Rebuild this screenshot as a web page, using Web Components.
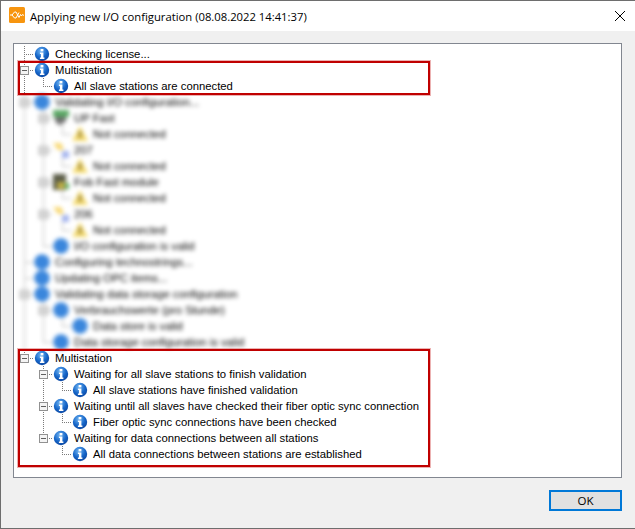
<!DOCTYPE html>
<html>
<head>
<meta charset="utf-8">
<title>Applying new I/O configuration</title>
<style>
  html, body { margin: 0; height: 100%; background: #f0f0f0; }
</style>
</head>
<body>

<config-dialog caption="Applying new I/O configuration (08.08.2022 14:41:37)">
  <tree-view>
    <tree-row depth="0" link="tee" text="Checking license..."></tree-row>
    <tree-row depth="0" link="tee" toggle text="Multistation"></tree-row>
    <tree-row depth="1" guides="0" link="end" text="All slave stations are connected"></tree-row>

    <blur-group>
      <tree-row depth="0" guides="" link="tee" toggle flat text="Validating I/O configuration..."></tree-row>
      <tree-row depth="1" guides="0" link="tee" toggle icon="module" text="UP Fast"></tree-row>
      <tree-row depth="2" guides="0,1" link="end" icon="warn" text="Not connected"></tree-row>
      <tree-row depth="1" guides="0" link="tee" toggle icon="key" text="207"></tree-row>
      <tree-row depth="2" guides="0,1" link="end" icon="warn" text="Not connected"></tree-row>
      <tree-row depth="1" guides="0" link="tee" toggle icon="box" text="Fob Fast module"></tree-row>
      <tree-row depth="2" guides="0,1" link="end" icon="warn" text="Not connected"></tree-row>
      <tree-row depth="1" guides="0" link="tee" toggle icon="key" text="206"></tree-row>
      <tree-row depth="2" guides="0,1" link="end" icon="warn" text="Not connected"></tree-row>
      <tree-row depth="1" guides="0" link="end" flat text="I/O configuration is valid"></tree-row>
      <tree-row depth="0" link="tee" flat text="Configuring technostrings..."></tree-row>
      <tree-row depth="0" link="tee" flat text="Updating OPC items..."></tree-row>
      <tree-row depth="0" link="tee" toggle flat text="Validating data storage configuration"></tree-row>
      <tree-row depth="1" guides="0" link="tee" toggle flat text="Verbrauchswerte (pro Stunde)"></tree-row>
      <tree-row depth="2" guides="0,1" link="end" flat text="Data store is valid"></tree-row>
      <tree-row depth="1" guides="0" link="end" flat text="Data storage configuration is valid"></tree-row>
    </blur-group>

    <tree-row depth="0" link="end" toggle text="Multistation"></tree-row>
    <tree-row depth="1" link="tee" toggle text="Waiting for all slave stations to finish validation"></tree-row>
    <tree-row depth="2" guides="1" link="end" text="All slave stations have finished validation"></tree-row>
    <tree-row depth="1" link="tee" toggle text="Waiting until all slaves have checked their fiber optic sync connection"></tree-row>
    <tree-row depth="2" guides="1" link="end" text="Fiber optic sync connections have been checked"></tree-row>
    <tree-row depth="1" link="end" toggle text="Waiting for data connections between all stations"></tree-row>
    <tree-row depth="2" link="end" text="All data connections between stations are established"></tree-row>

    <red-mark slot="marks" style="top:17px;height:34px"></red-mark>
    <red-mark slot="marks" style="top:305px;height:118px"></red-mark>
  </tree-view>
</config-dialog>

<script>
const ICONS = {
	info: `<svg viewBox="0 0 16 16" width="16" height="16">
      <defs><radialGradient id="g" cx="0.42" cy="0.3" r="0.8">
        <stop offset="0" stop-color="#6fb4f2"/><stop offset="0.55" stop-color="#1565c8"/><stop offset="1" stop-color="#0b3f96"/>
      </radialGradient></defs>
      <circle cx="8" cy="8" r="7.2" fill="url(#g)"/>
      <rect x="6.6" y="3" width="2.8" height="2.4" fill="#fff"/>
      <path d="M5.9 6.5h3.5v5h1v1.4H5.9v-1.4h1V7.9h-1z" fill="#fff"/>
    </svg>`,
	flat: `<svg viewBox="0 0 16 16" width="16" height="16"><circle cx="8" cy="8" r="7.8" fill="#3a86dc"/></svg>`,
	warn: `<svg viewBox="0 0 16 16" width="16" height="16"><path d="M8 0 16 15H0z" fill="#f5dc72"/><rect x="6.5" y="5" width="3" height="7" fill="#a08a40"/></svg>`,
	module: `<svg viewBox="0 0 16 16" width="16" height="16"><rect x="0" y="0" width="16" height="7" fill="#5aa864"/><rect x="2" y="7" width="11" height="5" fill="#6c6c6c"/><rect x="4" y="12" width="6" height="3" fill="#8a8a8a"/></svg>`,
	key: `<svg viewBox="0 0 16 16" width="16" height="16"><path d="M0 1h8l3 7H5z" fill="#f8d873"/><rect x="9" y="9" width="7" height="7" fill="#a4b4ee"/></svg>`,
	box: `<svg viewBox="0 0 16 16" width="16" height="16"><rect x="0" y="0" width="13" height="16" fill="#5c5d48"/><rect x="4" y="8" width="9" height="7" fill="#bfae45"/><rect x="12" y="9" width="4" height="6" fill="#5aa864"/></svg>`
};

class ConfigDialog extends HTMLElement {
	constructor() {
		super();
		this.attachShadow({ mode: "open" });
		this.shadowRoot.innerHTML = `
    <style>
    :host {
      display: flex;
      flex-direction: column;
      box-sizing: border-box;
      height: 529px;
      border-top: 1px solid #6e6e6e;
      border-left: 1px solid #6e6e6e;
      border-bottom: 1px solid #6e6e6e;
      background: #f0f0f0;
      color: #000;
      font: 12px "Open Sans", "Liberation Sans", sans-serif;
    }
    header {
      display: flex;
      align-items: center;
      height: 30px;
      padding: 0 10px 0 8px;
      background: #fff;
      font-size: 11.27px;
    }
    header .logo { flex: none; margin: 0 5px 2px 0; }
    header span { flex: 1; }
    main {
      flex: 1;
      display: flex;
      padding: 12px 13px 0 12px;
      min-height: 0;
    }
    footer {
      display: flex;
      justify-content: flex-end;
      padding: 12px 13px 17px 0;
    }
    button {
      width: 73px;
      height: 21px;
      box-sizing: border-box;
      padding: 0;
      border: 2px solid #0078d7;
      background: #e1e1e1;
      font: 11.5px "Open Sans", "Liberation Sans", sans-serif;
      color: #000;
    }
    </style>
    <header>
      <svg class="logo" viewBox="0 0 16 16" width="16" height="16">
        <rect width="16" height="16" rx="1.5" fill="#f7950f"/>
        <path d="M1 8h2l2.5-3H7l3 5.5 1.5-3 1 1.5 1-1.5 1.5 1M3 8l2.5 3H7l3-5.5" fill="none" stroke="#fff" stroke-width="1"/>
      </svg>
      <span></span>
      <svg viewBox="0 0 10 10" width="10" height="10"><path d="M0 0 10 10M10 0 0 10" stroke="#000" fill="none"/></svg>
    </header>
    <main><slot></slot></main>
    <footer><button>OK</button></footer>
    `;
	}
	connectedCallback() {
		this.shadowRoot.querySelector("header span").textContent = this.getAttribute("caption");
	}
}
customElements.define("config-dialog", ConfigDialog);

class TreeView extends HTMLElement {
	constructor() {
		super();
		this.attachShadow({ mode: "open" });
		this.shadowRoot.innerHTML = `
    <style>
    :host {
      display: block;
      position: relative;
      flex: 1;
      box-sizing: border-box;
      border: 1px solid #828790;
      background: #fff;
      padding: 2px 0 0 1px;
      overflow: hidden;
      font: 11.3px "Liberation Sans", Arial, sans-serif;
    }
    </style>
    <slot></slot>
    <slot name="marks"></slot>
    `;
	}
}
customElements.define("tree-view", TreeView);

class BlurGroup extends HTMLElement {
	constructor() {
		super();
		this.attachShadow({ mode: "open" });
		this.shadowRoot.innerHTML = `
    <style>
    :host { display: block; filter: blur(2.2px); }
    </style>
    <slot></slot>
    `;
	}
}
customElements.define("blur-group", BlurGroup);

class RedMark extends HTMLElement {
	constructor() {
		super();
		this.attachShadow({ mode: "open" });
		this.shadowRoot.innerHTML = `
    <style>
    :host {
      position: absolute;
      left: 4px;
      width: 412px;
      box-sizing: border-box;
      border: 2px solid #c00000;
      box-shadow: 0 0 0 1px rgba(192, 0, 0, 0.3);
    }
    </style>
    `;
	}
}
customElements.define("red-mark", RedMark);

class TreeRow extends HTMLElement {
	constructor() {
		super();
		this.attachShadow({ mode: "open" });
	}
	connectedCallback() {
		const depth = Number(this.getAttribute("depth") || 0);
		const guides = (this.getAttribute("guides") || "").split(",").filter(Boolean).map(Number);
		const link = this.getAttribute("link") || "tee";
		const icon = this.getAttribute("icon") || (this.hasAttribute("flat") ? "flat" : "info");

		let cells = "";
		for (let i = 0; i < depth; i++) {
			cells += `<span class="cell ${guides.includes(i) ? "guide" : ""}"></span>`;
		}
		const box = this.hasAttribute("toggle") ? `<span class="toggle"></span>` : "";
		cells += `<span class="cell ${link}">${box}</span>`;

		this.shadowRoot.innerHTML = `
    <style>
    :host {
      --dots-v: repeating-linear-gradient(to bottom, #7a7a7a 0 1px, transparent 1px 2px);
      --dots-h: repeating-linear-gradient(to right, #7a7a7a 0 1px, transparent 1px 2px);
      display: flex;
      align-items: center;
      height: 16px;
      white-space: nowrap;
    }
    .cell {
      flex: none;
      display: flex;
      align-items: center;
      width: 19px;
      height: 16px;
      background-repeat: no-repeat;
    }
    .guide { background-image: var(--dots-v); background-size: 1px 16px; background-position: 9px 0; }
    .tee {
      background-image: var(--dots-v), var(--dots-h);
      background-size: 1px 16px, 10px 1px;
      background-position: 9px 0, 9px 8px;
    }
    .end {
      background-image: var(--dots-v), var(--dots-h);
      background-size: 1px 8px, 10px 1px;
      background-position: 9px 0, 9px 8px;
    }
    .toggle {
      box-sizing: border-box;
      width: 9px;
      height: 9px;
      margin-left: 5px;
      border: 1px solid #919191;
      background: linear-gradient(#5f5f5f, #5f5f5f) center / 5px 1px no-repeat, #f4f4f4;
    }
    svg { flex: none; display: block; }
    .label { margin-left: 5px; line-height: 16px; }
    </style>
    ${cells}${ICONS[icon]}<span class="label"></span>
    `;
		this.shadowRoot.querySelector(".label").textContent = this.getAttribute("text");
	}
}
customElements.define("tree-row", TreeRow);
</script>
</body>
</html>
